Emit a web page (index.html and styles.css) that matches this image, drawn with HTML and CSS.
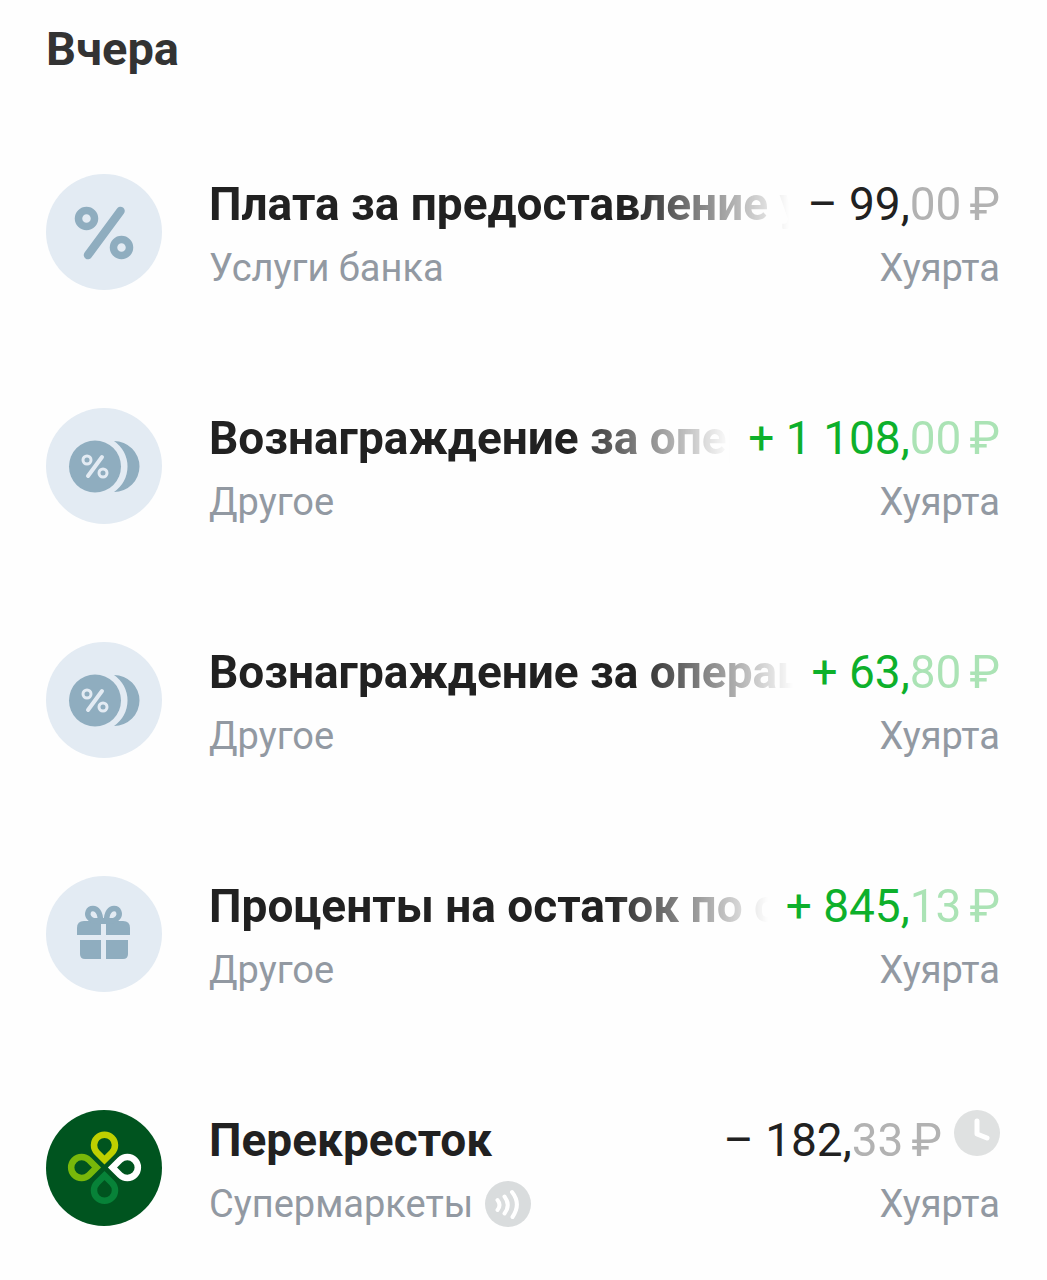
FILE: index.html
```html
<!DOCTYPE html>
<html lang="ru">
<head>
    <meta charset="UTF-8">
    <meta name="viewport" content="width=device-width, initial-scale=1.0">
    <title>Операции</title>
    <link rel="stylesheet" href="styles.css">
</head>

<body>
    <main class="history">
        <h2 class="day">Вчера</h2>
        <ul class="operations">
            <li class="operation">
                <svg class="icon" viewBox="0 0 116 116">
                    <circle cx="58" cy="58" r="58" fill="#e3ebf3"/>
                    <g fill="none" stroke="#8fadbf">
                        <circle cx="40.500" cy="44.500" r="8" stroke-width="7.500"/>
                        <circle cx="75.500" cy="73.500" r="8" stroke-width="7.500"/>
                        <path d="M74.500 37L42 81" stroke-width="8.500" stroke-linecap="round"/>
                    </g>
                </svg>
                <div class="info">
                    <div class="line">
                        <span class="title fade">Плата за предоставление у</span>
                        <span class="amount">– 99,<span class="cents">00<span class="currency">₽</span></span></span>
                    </div>
                    <div class="line small">
                        <span class="category">Услуги банка</span>
                        <span class="account">Хуярта</span>
                    </div>
                </div>
            </li>
            <li class="operation">
                <svg class="icon" viewBox="0 0 116 116">
                    <circle cx="58" cy="58" r="58" fill="#e3ebf3"/>
                    <circle cx="49" cy="58.500" r="26" fill="#8fadbf"/>
                    <path d="M68 33A25.500 25.500 0 0 1 68 84A30.800 30.800 0 0 0 68 33Z" fill="#8fadbf"/>
                    <g fill="none" stroke="#e3ebf3">
                        <circle cx="41" cy="52" r="4" stroke-width="3"/>
                        <circle cx="57" cy="65" r="4" stroke-width="3"/>
                        <path d="M56 49L42 68" stroke-width="4" stroke-linecap="round"/>
                    </g>
                </svg>
                <div class="info">
                    <div class="line">
                        <span class="title fade">Вознаграждение за опер</span>
                        <span class="amount income">+ 1 108,<span class="cents">00<span class="currency">₽</span></span></span>
                    </div>
                    <div class="line small">
                        <span class="category">Другое</span>
                        <span class="account">Хуярта</span>
                    </div>
                </div>
            </li>
            <li class="operation">
                <svg class="icon" viewBox="0 0 116 116">
                    <circle cx="58" cy="58" r="58" fill="#e3ebf3"/>
                    <circle cx="49" cy="58.500" r="26" fill="#8fadbf"/>
                    <path d="M68 33A25.500 25.500 0 0 1 68 84A30.800 30.800 0 0 0 68 33Z" fill="#8fadbf"/>
                    <g fill="none" stroke="#e3ebf3">
                        <circle cx="41" cy="52" r="4" stroke-width="3"/>
                        <circle cx="57" cy="65" r="4" stroke-width="3"/>
                        <path d="M56 49L42 68" stroke-width="4" stroke-linecap="round"/>
                    </g>
                </svg>
                <div class="info">
                    <div class="line">
                        <span class="title fade">Вознаграждение за операц</span>
                        <span class="amount income">+ 63,<span class="cents">80<span class="currency">₽</span></span></span>
                    </div>
                    <div class="line small">
                        <span class="category">Другое</span>
                        <span class="account">Хуярта</span>
                    </div>
                </div>
            </li>
            <li class="operation">
                <svg class="icon" viewBox="0 0 116 116">
                    <circle cx="58" cy="58" r="58" fill="#e3ebf3"/>
                    <g fill="#8fadbf">
                        <path d="M31 59V52Q31 45 38 45H55V59Z"/>
                        <path d="M60 59V45H77Q84 45 84 52V59Z"/>
                        <path d="M34 64H55V83H39Q34 83 34 78Z"/>
                        <path d="M60 64H82V78Q82 83 77 83H60Z"/>
                        <path d="M48 42H67V48H48Z"/>
                    </g>
                    <path d="M54.500 45.500C54.500 36 50.500 32.500 47 32.500C42 32.500 40.500 38 43 41.500C45.500 45 50 45.500 54.500 45.500ZM60.500 45.500C60.500 36 64.500 32.500 68 32.500C73 32.500 74.500 38 72 41.500C69.500 45 65 45.500 60.500 45.500Z" fill="none" stroke="#8fadbf" stroke-width="5.500"/>
                    <path d="M55 48H60V60H55Z" fill="#e3ebf3"/>
                </svg>
                <div class="info">
                    <div class="line">
                        <span class="title fade">Проценты на остаток по с</span>
                        <span class="amount income">+ 845,<span class="cents">13<span class="currency">₽</span></span></span>
                    </div>
                    <div class="line small">
                        <span class="category">Другое</span>
                        <span class="account">Хуярта</span>
                    </div>
                </div>
            </li>
            <li class="operation">
                <svg class="icon" viewBox="0 0 116 116">
                    <circle cx="58" cy="58" r="58" fill="#00541f"/>
                    <g fill="none" stroke-width="6.500">
                        <path d="M58.500 50L51 42.500A10.500 10.500 0 1 1 66 42.500Z" stroke="#bfd000"/>
                        <path d="M50.500 57.500L43 65A10.500 10.500 0 1 1 43 50Z" stroke="#78b80a"/>
                        <path d="M66.500 57.500L74 50A10.500 10.500 0 1 1 74 65Z" stroke="#fff"/>
                        <path d="M58.500 65.500L66 73A10.500 10.500 0 1 1 51 73Z" stroke="#078238"/>
                    </g>
                </svg>
                <div class="info">
                    <div class="line">
                        <span class="title">Перекресток</span>
                        <span class="amount">– 182,<span class="cents">33<span class="currency">₽</span></span></span>
                        <svg class="badge pending" viewBox="0 0 46 46">
                            <circle cx="23" cy="23" r="23" fill="#dfe1e1"/>
                            <path d="M23 11V24L33 28" fill="none" stroke="#fff" stroke-width="5" stroke-linecap="round" stroke-linejoin="round"/>
                        </svg>
                    </div>
                    <div class="line small">
                        <span class="category">Супермаркеты</span>
                        <svg class="badge" viewBox="0 0 46 46">
                            <circle cx="23" cy="23" r="23" fill="#d9dcdd"/>
                            <path d="M12.500 19Q16.500 24 12.500 29M19.500 15.500Q26 24 19.500 32.500M27 11Q36.500 23 27.500 36" fill="none" stroke="#fff" stroke-width="4" stroke-linecap="round"/>
                        </svg>
                        <span class="account">Хуярта</span>
                    </div>
                </div>
            </li>
        </ul>
    </main>
</body>
</html>
```
FILE: styles.css
```css
*, *:before, *:after {
    box-sizing: border-box;
}

body {
    margin: 0;
    background-color: #fefefe;
    font-family: Roboto, "Liberation Sans", sans-serif;
    color: #212121;
}

.history {
    padding: 22px 47px 0 46px;
}

.day {
    margin: 0 0 98px 0;
    font-size: 47px;
    line-height: 54px;
    font-weight: 700;
    color: #333;
}

.operations {
    margin: 0;
    padding: 0;
    list-style: none;
}

.operation {
    display: flex;
    gap: 47px;
    margin-bottom: 106px;
}

.operation:last-child {
    margin-bottom: 42px;
}

.icon {
    flex: none;
    width: 116px;
    height: 116px;
}

.info {
    flex: 1;
    min-width: 0;
}

.line {
    display: flex;
    align-items: center;
    height: 60px;
}

.line.small {
    height: 68px;
    font-size: 38px;
    color: #9299a2;
}

.title {
    flex: 1;
    min-width: 0;
    overflow: hidden;
    white-space: nowrap;
    font-size: 46px;
    line-height: 60px;
    font-weight: 700;
}

/* длинное название плавно исчезает у суммы */
.fade {
    -webkit-mask-image: linear-gradient(to left, transparent, #000 160px);
    mask-image: linear-gradient(to left, transparent, #000 160px);
}

.amount {
    margin-left: 18px;
    white-space: nowrap;
    font-size: 46px;
    line-height: 60px;
}

.income {
    color: #0db02b;
}

.cents {
    opacity: 0.34;
}

.currency {
    margin-left: 8px;
}

.account {
    margin-left: auto;
}

.badge {
    flex: none;
    width: 46px;
    height: 46px;
    margin-left: 12px;
}

.pending {
    align-self: flex-start;
}
```
